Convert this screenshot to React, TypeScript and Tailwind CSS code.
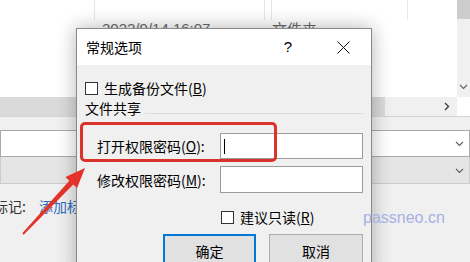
import React from "react";

function Chevron({ dir }: { dir: "down" | "right" }) {
  return (
    <svg width="9" height="9" viewBox="0 0 9 9" className="shrink-0">
      {dir === "down" ? (
        <path d="M1 3l3.5 3.5L8 3" fill="none" stroke="#606060" strokeWidth="1.1" />
      ) : (
        <path d="M3 1l3.5 3.5L3 8" fill="none" stroke="#404040" strokeWidth="1.4" />
      )}
    </svg>
  );
}

function CheckBox() {
  return <span className="h-[13px] w-[13px] shrink-0 border border-[#333333] bg-white" />;
}

export default function App() {
  return (
    <div className="relative h-[262px] w-[470px] overflow-hidden bg-[#f0f0f0] font-['Noto_Sans_CJK_SC',sans-serif] text-[14px] text-black">
      {/* list behind the dialog */}
      <div className="flex h-[97px]">
        <div className="flex-1 bg-white">
          <div className="flex h-[20px]">
            <div className="w-[95px] border-r border-[#e6e6e6]" />
            <div className="w-[170px] border-r border-[#e6e6e6]" />
            <div className="w-[7px] border-r border-[#e6e6e6]" />
            <div className="w-[136px] border-r border-[#e6e6e6]" />
          </div>
          <div className="flex h-[18px] items-center text-[15px] leading-[18px] text-[#6a6a6a]">
            <span className="ml-[102px] w-[170px] font-['Liberation_Sans',sans-serif]">2022/9/14 16:07</span>
            <span>文件夹</span>
          </div>
        </div>
        <div className="flex w-[13px] flex-col items-center bg-[#f0f0f0]">
          <div className="h-[19px] w-full bg-[#cdcdcd]" />
          <div className="flex-1" />
          <div className="mb-[6px]">
            <Chevron dir="down" />
          </div>
        </div>
      </div>

      {/* horizontal scrollbar */}
      <div className="flex h-[19px]">
        <div className="flex flex-1 items-center bg-[#f0f0f0]">
          <div className="h-full w-[385px] bg-[#dadada]" />
          <div className="flex-1" />
          <div className="mr-[6px]">
            <Chevron dir="right" />
          </div>
        </div>
        <div className="w-[13px] bg-white" />
      </div>
      <div className="h-px bg-[#d4d4d4]" />
      <div className="h-[13px]" />

      {/* combo boxes */}
      <div className="flex h-[27px] items-center justify-end border border-[#a9a9a9] bg-white pr-[5px]">
        <Chevron dir="down" />
      </div>
      <div className="flex h-[27px] items-center justify-end border-x border-b border-[#cccccc] bg-[#e5e5e5] pr-[5px]">
        <Chevron dir="down" />
      </div>

      <div className="mt-[12px] flex h-[20px] items-center leading-[20px]">
        <span className="ml-[-6px] text-[#333333]">标记:</span>
        <span className="ml-[13px] text-[#2f6cc0]">添加标记</span>
      </div>

      {/* dialog */}
      <div className="absolute left-[76px] top-[28px] h-[250px] w-[296px] border border-[#8a8a8a] bg-[#f0f0f0] shadow-[0_0_18px_rgba(0,0,0,0.3)]">
        <div className="flex h-[36px] items-center bg-white pl-[9px] pr-[21px]">
          <span className="flex-1 leading-[20px]">常规选项</span>
          <span className="w-[20px] text-center font-['Liberation_Sans',sans-serif] text-[15px] leading-[20px]">?</span>
          <svg width="13" height="13" viewBox="0 0 13 13" className="ml-[39px] mt-[1px]">
            <path d="M0.5 0.5L12.5 12.5M12.5 0.5L0.5 12.5" stroke="#111" strokeWidth="1" />
          </svg>
        </div>

        <div className="flex flex-col px-[8px] leading-[20px]">
          <div className="mt-[13px] flex h-[20px] items-center gap-[6px]">
            <CheckBox />
            <span>
              生成备份文件(<span className="underline">B</span>)
            </span>
          </div>

          <div className="flex h-[20px] items-center">
            <span>文件共享</span>
            <div className="mb-[4px] ml-[4px] h-px flex-1 self-end bg-[#dcdcdc]" />
          </div>

          <div className="mt-[15px] flex h-[26px] items-center">
            <span className="w-[135px] pl-[12px]">
              打开权限密码(<span className="underline">O</span>):
            </span>
            <div className="flex h-full w-[143px] items-center border border-[#9b9b9b] bg-white pl-[3px]">
              <span className="h-[15px] w-px bg-black" />
            </div>
          </div>

          <div className="mt-[7px] flex h-[27px] items-center">
            <span className="w-[135px] pl-[12px]">
              修改权限密码(<span className="underline">M</span>):
            </span>
            <div className="h-full w-[143px] border border-[#9b9b9b] bg-white" />
          </div>

          <div className="mt-[14px] flex h-[20px] items-center gap-[6px] pl-[136px]">
            <CheckBox />
            <span>
              建议只读(<span className="underline">R</span>)
            </span>
          </div>

          <div className="mt-[7px] flex justify-end gap-[13px]">
            <button
              type="button"
              className="flex h-[34px] w-[93px] items-center justify-center border-2 border-[#0078d7] bg-[#e1e1e1]"
            >
              确定
            </button>
            <button
              type="button"
              className="flex h-[34px] w-[94px] items-center justify-center border border-[#adadad] bg-[#e1e1e1]"
            >
              取消
            </button>
          </div>
        </div>

        {/* red highlight */}
        <div className="absolute left-[3px] top-[93px] h-[40px] w-[197px] rounded-[5px] border-[3px] border-[#d8342c]" />
      </div>

      {/* watermark */}
      <span className="absolute left-[363px] top-[208px] font-['Liberation_Sans',sans-serif] text-[16px] leading-[20px] text-[#a7b0e2]">
        passneo.cn
      </span>

      {/* red arrow */}
      <svg className="pointer-events-none absolute left-0 top-0" width="470" height="262" viewBox="0 0 470 262">
        <polygon
          points="22.3,233.3 69.3,180.7 65.5,177.1 85,168 77.1,188.1 73.3,184.5 23.7,234.7"
          fill="#e3322a"
        />
      </svg>
    </div>
  );
}
